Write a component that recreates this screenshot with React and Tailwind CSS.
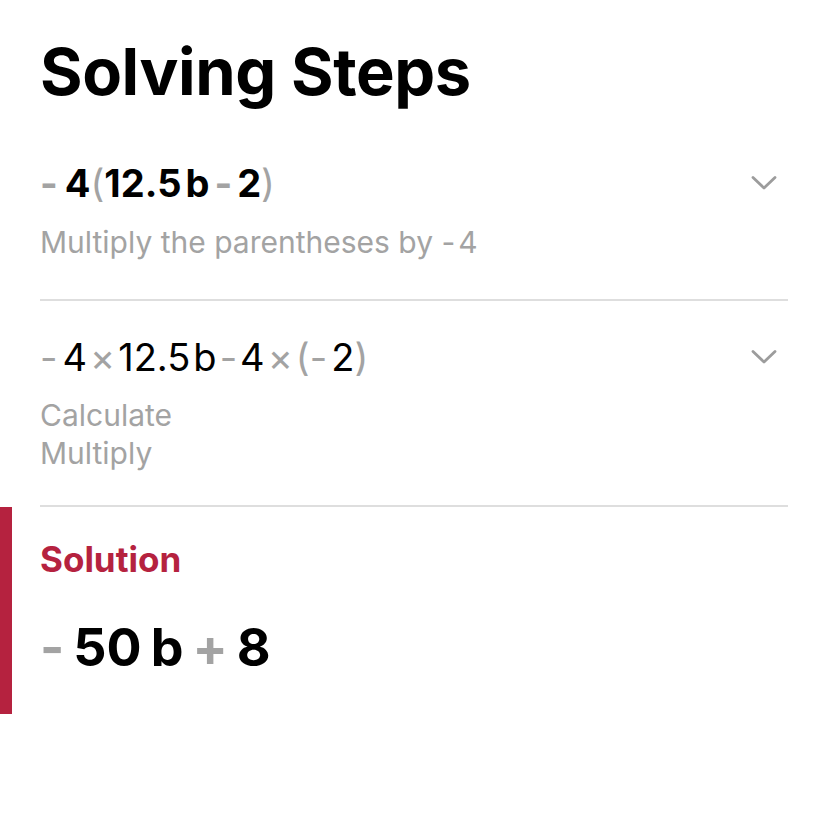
import React from "react";

const Op = ({ children, gap = "mx-[5px]" }) => <span className={`text-[#a3a3a3] ${gap}`}>{children}</span>;

function Chevron() {
  return (
    <svg width="26" height="16" viewBox="0 0 26 16" fill="none" className="mr-[11px]">
      <path d="M2 2.5 L13 13 L24 2.5" stroke="#9c9c9c" strokeWidth="2.8" strokeLinecap="round" strokeLinejoin="round" />
    </svg>
  );
}

export default function App() {
  return (
    <div className="w-[828px] h-[828px] bg-white overflow-hidden" style={{ fontFamily: "Inter, 'Liberation Sans', sans-serif" }}>
      <div className="pl-[40px] pr-[40px] pt-[36px]">
        <h1 className="text-[65px] font-bold leading-[72px] text-black tracking-[-0.4px]">Solving Steps</h1>

        {/* step 1 */}
        <div className="mt-[53px] pb-[38px] border-b-2 border-[#dedede]">
          <div className="flex items-center justify-between h-[44px]">
            <div className="text-[38px] font-bold text-black leading-[44px] flex items-center">
              <span className="text-[#a3a3a3] mr-[7px]">-</span>4<span className="text-[#a3a3a3] font-normal">(</span>12.5<span className="ml-[4px]">b</span>
              <Op>-</Op>2<span className="text-[#a3a3a3] font-normal">)</span>
            </div>
            <Chevron />
          </div>
          <p className="mt-[18px] text-[30px] leading-[38px] text-[#a3a3a3]">Multiply the parentheses by <span className="mr-[3px]">-</span>4</p>
        </div>

        {/* step 2 */}
        <div className="pt-[34px] pb-[33px] border-b-2 border-[#dedede]">
          <div className="flex items-center justify-between h-[44px]">
            <div className="text-[38px] text-black leading-[44px] flex items-center">
              <span className="text-[#a3a3a3] mr-[5px]">-</span>4<Op gap="mx-[3px]">×</Op>12.5<span className="ml-[3px]">b</span>
              <Op gap="mx-[3px]">-</Op>4<Op gap="mx-[3px]">×</Op><span className="text-[#a3a3a3]">(</span><span className="text-[#a3a3a3] mr-[4px]">-</span>2<span className="text-[#a3a3a3]">)</span>
            </div>
            <Chevron />
          </div>
          <div className="mt-[17px] text-[30px] leading-[38px] text-[#a3a3a3]">
            <p>Calculate</p>
            <p>Multiply</p>
          </div>
        </div>
      </div>

      {/* solution */}
      <div className="flex">
        <div className="w-[12px] h-[207px] bg-[#b5223f]" />
        <div className="pl-[28px] pt-[32px]">
          <p className="text-[35px] font-bold leading-[40px] text-[#b5223f]">Solution</p>
          <div className="mt-[39px] text-[52px] font-bold leading-[60px] text-black flex items-center">
            <span className="text-[#a3a3a3] mr-[9px]">-</span>50<span className="ml-[9px]">b</span>
            <span className="text-[#a3a3a3] mx-[9px]">+</span>8
          </div>
        </div>
      </div>
    </div>
  );
}
